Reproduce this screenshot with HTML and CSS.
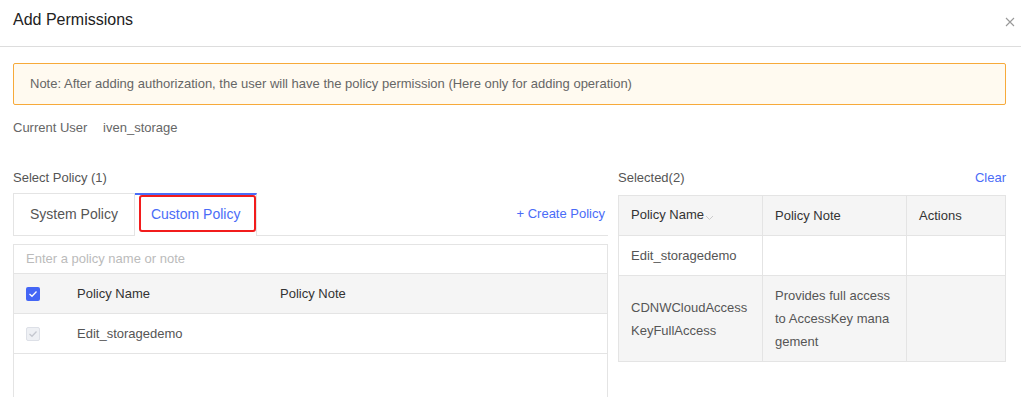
FILE: index.html
```html
<!DOCTYPE html>
<html lang="en">
<head>
    <meta charset="UTF-8">
    <title>Add Permissions</title>
    <link rel="stylesheet" href="styles.css">
</head>
<body>
    <div class="modal-header">
        <h1>Add Permissions</h1>
        <span class="close">
            <svg width="10" height="10" viewBox="0 0 10 10"><path d="M1 1L9 9M9 1L1 9" stroke="#999" stroke-width="1.1" fill="none"/></svg>
        </span>
    </div>

    <div class="modal-body">
        <div class="alert">Note: After adding authorization, the user will have the policy permission (Here only for adding operation)</div>

        <div class="user-line">
            <span class="label">Current User</span>
            <span>iven_storage</span>
        </div>

        <div class="columns">
            <div class="left-col">
                <div class="section-title">Select Policy (1)</div>
                <div class="tabs">
                    <div class="tab">System Policy</div>
                    <div class="tab active"><span class="highlight">Custom Policy</span></div>
                    <a class="create-link">+ Create Policy</a>
                </div>
                <div class="policy-box">
                    <div class="search">Enter a policy name or note</div>
                    <div class="policy-row head">
                        <span class="check checked">
                            <svg width="10" height="8" viewBox="0 0 10 8"><path d="M1.5 4L4 6.3L8.5 1.5" stroke="#fff" stroke-width="1.3" fill="none"/></svg>
                        </span>
                        <span class="col-name">Policy Name</span>
                        <span>Policy Note</span>
                    </div>
                    <div class="policy-row">
                        <span class="check disabled">
                            <svg width="10" height="8" viewBox="0 0 10 8"><path d="M1.5 4L4 6.3L8.5 1.5" stroke="#c4c7cf" stroke-width="1.3" fill="none"/></svg>
                        </span>
                        <span class="col-name">Edit_storagedemo</span>
                        <span></span>
                    </div>
                </div>
            </div>

            <div class="right-col">
                <div class="section-title selected-head">
                    <span>Selected(2)</span>
                    <a class="clear-link">Clear</a>
                </div>
                <table class="selected-table">
                    <thead>
                        <tr>
                            <th>Policy Name<span class="caret"><svg width="9" height="6" viewBox="0 0 9 6"><path d="M1 1L4.5 4.5L8 1" stroke="#ccc" stroke-width="1" fill="none"/></svg></span></th>
                            <th>Policy Note</th>
                            <th>Actions</th>
                        </tr>
                    </thead>
                    <tbody>
                        <tr>
                            <td>Edit_storagedemo</td>
                            <td></td>
                            <td></td>
                        </tr>
                        <tr class="hover">
                            <td>CDNWCloudAccessKeyFullAccess</td>
                            <td>Provides full access to AccessKey management</td>
                            <td></td>
                        </tr>
                    </tbody>
                </table>
            </div>
        </div>
    </div>
</body>
</html>
```

FILE: styles.css
```css
body {
    margin: 0;
    font-family: "Liberation Sans", Arial, sans-serif;
    font-size: 13px;
    color: #333;
    background-color: #fff;
}
.modal-header {
    display: flex;
    justify-content: space-between;
    align-items: center;
    height: 46px;
    padding: 0 6px 0 13px;
    border-bottom: 1px solid #ddd;
}
.modal-header h1 {
    margin: 0;
    font-size: 16px;
    font-weight: normal;
    color: #222;
    padding-bottom: 6px;
}
.close {
    display: flex;
    padding-bottom: 2px;
}
.modal-body {
    padding: 16px 15px 0 13px;
}
.alert {
    height: 40px;
    line-height: 40px;
    padding-left: 16px;
    background-color: #fffaf0;
    border: 1px solid #f7aa3a;
    border-radius: 2px;
    color: #666;
}
.user-line {
    margin-top: 15px;
    color: #666;
}
.user-line .label {
    margin-right: 12px;
}
.columns {
    display: flex;
    gap: 10px;
    margin-top: 35px;
}
.left-col {
    width: 595px;
}
.right-col {
    flex: 1;
}
.section-title {
    color: #555;
    line-height: 15px;
    margin-bottom: 8px;
}
.tabs {
    display: flex;
    align-items: flex-end;
    height: 42px;
    border-bottom: 1px solid #e4e4e4;
}
.tab {
    box-sizing: border-box;
    height: 43px;
    margin-bottom: -1px;
    border: 1px solid #e4e4e4;
    padding: 0 16px;
    line-height: 40px;
    color: #555;
    font-size: 14px;
    background: #fff;
}
.tab.active {
    border: none;
    border-top: 2px solid #4a6cf7;
    padding: 0;
    width: 122px;
    border-right: 1px solid #e4e4e4;
}
.highlight {
    display: block;
    box-sizing: border-box;
    margin: 0 0 0 4px;
    width: 117px;
    height: 37px;
    line-height: 34px;
    padding-left: 10px;
    border: 2px solid #f21c1c;
    border-radius: 3px;
    color: #4a6cf7;
}
.create-link {
    margin-left: auto;
    margin-right: 3px;
    line-height: 42px;
    color: #4a6cf7;
}
.policy-box {
    margin-top: 8px;
    border: 1px solid #e4e4e4;
    border-bottom: none;
    height: 160px;
}
.search {
    height: 28px;
    line-height: 28px;
    padding-left: 12px;
    color: #bbb;
    border-bottom: 1px solid #e4e4e4;
}
.policy-row {
    display: flex;
    align-items: center;
    height: 39px;
    border-bottom: 1px solid #e4e4e4;
    padding-left: 12px;
    color: #555;
}
.policy-row.head {
    background-color: #f5f5f5;
    color: #333;
}
.check {
    box-sizing: border-box;
    width: 14px;
    height: 14px;
    border-radius: 2px;
    display: flex;
    align-items: center;
    justify-content: center;
    margin-right: 37px;
}
.check.checked {
    background-color: #4466f5;
}
.check.disabled {
    background-color: #eef0f4;
    border: 1px solid #dde0e7;
}
.col-name {
    width: 203px;
}
.selected-head {
    display: flex;
    justify-content: space-between;
    margin-bottom: 10px;
}
.clear-link {
    color: #4a6cf7;
}
.selected-table {
    width: 100%;
    border-collapse: collapse;
    table-layout: fixed;
}
.selected-table th, .selected-table td {
    border: 1px solid #e4e4e4;
    text-align: left;
    padding: 0 12px;
    vertical-align: middle;
}
.selected-table th {
    height: 39px;
    background-color: #f5f5f5;
    font-weight: normal;
    color: #333;
}
.selected-table th:nth-child(1), .selected-table th:nth-child(2) {
    width: 119px;
}
.selected-table td {
    height: 39px;
    color: #555;
    line-height: 23px;
    word-break: break-all;
}
.selected-table tr.hover td {
    background-color: #f5f5f5;
    height: 85px;
}
.caret {
    display: inline-block;
    vertical-align: middle;
    margin-left: 1px;
}
```
